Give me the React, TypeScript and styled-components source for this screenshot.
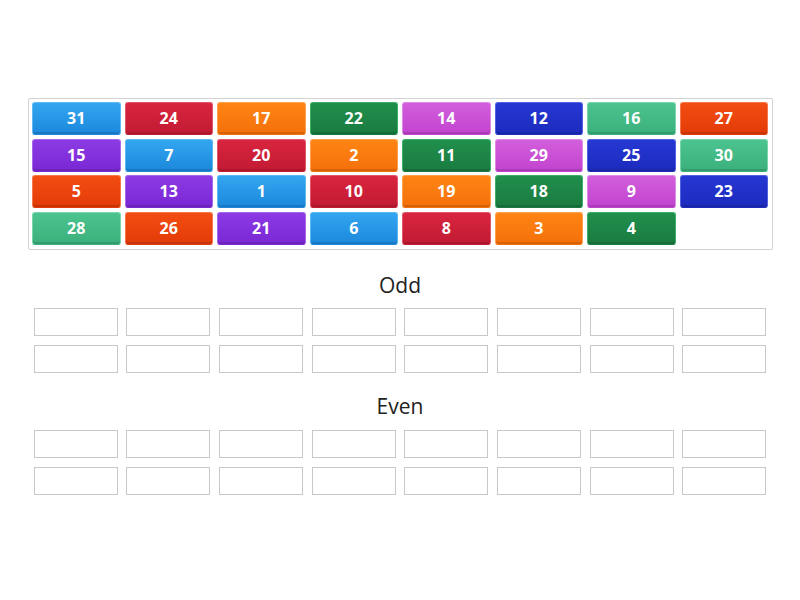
import React from "react";
import styled, { createGlobalStyle } from "styled-components";

const Global = createGlobalStyle`
  html, body { margin: 0; padding: 0; background: #ffffff; }
  body { font-family: "Open Sans", "Noto Sans", sans-serif; }
`;

type Swatch = { top: string; bottom: string; edge: string };

const palette: Swatch[] = [
  { top: "#33a6f0", bottom: "#1c88dc", edge: "#5cb9f4" }, // blue
  { top: "#d9253f", bottom: "#c21a33", edge: "#e2566a" }, // red
  { top: "#ff8514", bottom: "#f4700a", edge: "#ffa14d" }, // orange
  { top: "#208f4c", bottom: "#1a7b40", edge: "#3fae68" }, // dark green
  { top: "#d35fdc", bottom: "#c143cf", edge: "#e08ae7" }, // pink
  { top: "#2638d4", bottom: "#1c2bbd", edge: "#5161e0" }, // dark blue
  { top: "#4cc48f", bottom: "#3bb07c", edge: "#77d6ab" }, // teal
  { top: "#f44d12", bottom: "#e23b08", edge: "#f8774a" }, // orange red
  { top: "#8c3ae4", bottom: "#7a28d4", edge: "#a667ec" }, // purple
];

const numbers = [
  31, 24, 17, 22, 14, 12, 16, 27,
  15, 7, 20, 2, 11, 29, 25, 30,
  5, 13, 1, 10, 19, 18, 9, 23,
  28, 26, 21, 6, 8, 3, 4,
];

const Page = styled.div`
  padding-top: 98px;
  display: flex;
  flex-direction: column;
  align-items: center;
`;

const Board = styled.div`
  box-sizing: border-box;
  width: 745px;
  border: 1px solid #d2d2d2;
  border-radius: 2px;
  padding: 3px 1.5px 4px;
  display: grid;
  grid-template-columns: repeat(8, 1fr);
  row-gap: 3.7px;
`;

const Tile = styled.div<{ $c: Swatch }>`
  box-sizing: border-box;
  height: 33px;
  margin: 0 2px;
  border-radius: 3px;
  border: 1px solid ${(p) => p.$c.edge};
  border-bottom-color: ${(p) => p.$c.bottom};
  background: linear-gradient(to bottom, ${(p) => p.$c.top}, ${(p) => p.$c.bottom});
  box-shadow: inset 0 -2px 0 rgba(0, 0, 0, 0.12);
  color: #ffffff;
  font-family: "Open Sans", "Noto Sans", sans-serif;
  font-weight: 700;
  font-size: 16px;
  display: flex;
  align-items: center;
  justify-content: center;
  line-height: 1;
  padding-bottom: 1px;
`;

const Title = styled.div<{ $top: number; $bottom: number }>`
  margin-top: ${(p) => p.$top}px;
  margin-bottom: ${(p) => p.$bottom}px;
  height: 28px;
  line-height: 28px;
  font-size: 21px;
  color: #222222;
  text-align: center;
`;

const Drops = styled.div`
  width: 741px;
  display: grid;
  grid-template-columns: repeat(8, 1fr);
  row-gap: 9px;
  justify-items: center;
`;

const Slot = styled.div`
  box-sizing: border-box;
  width: 84px;
  height: 28px;
  border: 1px solid #c8c8c8;
  background: #ffffff;
`;

const Group: React.FC<{ label: string; top: number; bottom: number }> = ({ label, top, bottom }) => (
  <>
    <Title $top={top} $bottom={bottom}>{label}</Title>
    <Drops>
      {Array.from({ length: 16 }).map((_, i) => (
        <Slot key={i} />
      ))}
    </Drops>
  </>
);

export default function App() {
  return (
    <>
      <Global />
      <Page>
        <Board>
          {numbers.map((n, i) => (
            <Tile key={n} $c={palette[i % palette.length]}>{n}</Tile>
          ))}
        </Board>
        <Group label="Odd" top={21} bottom={9} />
        <Group label="Even" top={19} bottom={10} />
      </Page>
    </>
  );
}
